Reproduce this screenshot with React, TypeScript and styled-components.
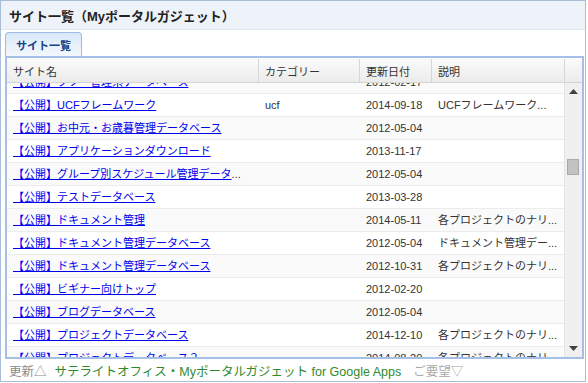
import styled, { createGlobalStyle } from 'styled-components'

const GlobalStyle = createGlobalStyle`
	body {
		margin: 0;
		background: #fff;
		font-family: 'Liberation Sans', 'Noto Sans CJK JP', sans-serif;
	}
`

type Site = { name: string; category?: string; date: string; note?: string }

const sites: Site[] = [
	{ name: '【公開】ブツ一管理系データベース', date: '2012-02-17' },
	{ name: '【公開】UCFフレームワーク', category: 'ucf', date: '2014-09-18', note: 'UCFフレームワーク...' },
	{ name: '【公開】お中元・お歳暮管理データベース', date: '2012-05-04' },
	{ name: '【公開】アプリケーションダウンロード', date: '2013-11-17' },
	{ name: '【公開】グループ別スケジュール管理データ', more: true, date: '2012-05-04' } as Site & { more?: boolean },
	{ name: '【公開】テストデータベース', date: '2013-03-28' },
	{ name: '【公開】ドキュメント管理', date: '2014-05-11', note: '各プロジェクトのナリ...' },
	{ name: '【公開】ドキュメント管理データベース', date: '2012-05-04', note: 'ドキュメント管理デー...' },
	{ name: '【公開】ドキュメント管理データベース', date: '2012-10-31', note: '各プロジェクトのナリ...' },
	{ name: '【公開】ビギナー向けトップ', date: '2012-02-20' },
	{ name: '【公開】ブログデータベース', date: '2012-05-04' },
	{ name: '【公開】プロジェクトデータベース', date: '2014-12-10', note: '各プロジェクトのナリ...' },
	{ name: '【公開】プロジェクトデータベース２', date: '2014-08-20', note: '各プロジェクトのナリ...' },
]

const columns = '252px 101px 72px 133px'

export default function App() {
	return (
		<>
			<GlobalStyle />
			<Frame>
				<TitleBar>サイト一覧（Myポータルガジェット）</TitleBar>
				<TabStrip>
					<Tab>サイト一覧</Tab>
				</TabStrip>
				<Panel>
					<HeaderRow>
						<HeadCell>サイト名</HeadCell>
						<HeadCell>カテゴリー</HeadCell>
						<HeadCell>更新日付</HeadCell>
						<HeadCell>説明</HeadCell>
						<HeadCell />
					</HeaderRow>
					<Body>
						<Rows>
							<RowList>
								{sites.map((site, i) => (
									<Row key={i} shaded={i % 2 === 0}>
										<Cell>
											<SiteLink href='#'>{site.name}</SiteLink>
											{(site as Site & { more?: boolean }).more && '...'}
										</Cell>
										<Cell>{site.category}</Cell>
										<Cell>{site.date}</Cell>
										<Cell>{site.note}</Cell>
									</Row>
								))}
							</RowList>
						</Rows>
						<ScrollTrack>
							<Arrow>
								<svg width='9' height='5' viewBox='0 0 9 5'>
									<path d='M0 5 L4.5 0 L9 5 Z' fill='#404040' />
								</svg>
							</Arrow>
							<Thumb style={{ top: 76 }} />
							<Arrow>
								<svg width='9' height='5' viewBox='0 0 9 5'>
									<path d='M0 0 L4.5 5 L9 0 Z' fill='#404040' />
								</svg>
							</Arrow>
						</ScrollTrack>
					</Body>
				</Panel>
				<Footer>
					<Muted>更新△</Muted>
					<Brand>サテライトオフィス・Myポータルガジェット for Google Apps</Brand>
					<Faint>ご要望▽</Faint>
				</Footer>
			</Frame>
		</>
	)
}

const Frame = styled.div`
	width: 584px;
	height: 380px;
	border: 1px solid #a9bdd8;
	display: flex;
	flex-direction: column;
	overflow: hidden;
	background: #fff;
`

const TitleBar = styled.div`
	height: 28px;
	flex: none;
	display: flex;
	align-items: center;
	padding-left: 8px;
	background: #eef3fa;
	border-bottom: 1px solid #dfe7f2;
	font-size: 13px;
	font-weight: bold;
	color: #222;
`

const TabStrip = styled.div`
	height: 26px;
	flex: none;
	display: flex;
	align-items: flex-end;
	padding-left: 4px;
`

const Tab = styled.div`
	height: 24px;
	box-sizing: border-box;
	width: 77px;
	display: flex;
	align-items: center;
	justify-content: center;
	border: 1px solid #9dbbe5;
	border-bottom: none;
	border-radius: 4px 4px 0 0;
	background: linear-gradient(#d9e7f8, #f4f8fd);
	font-size: 11px;
	font-weight: bold;
	color: #15428b;
`

const Panel = styled.div`
	flex: 1;
	min-height: 0;
	margin: 0 1px 0 4px;
	border: 2px solid #a5c0e6;
	padding-top: 1px;
	display: flex;
	flex-direction: column;
`

const HeaderRow = styled.div`
	height: 23px;
	flex: none;
	display: grid;
	grid-template-columns: ${columns} 1fr;
	background: linear-gradient(#fbfbfb, #ebebeb);
	border-bottom: 1px solid #d4d4d4;
`

const HeadCell = styled.div`
	display: flex;
	align-items: center;
	padding-left: 6px;
	border-right: 1px solid #d6d6d6;
	font-size: 11px;
	color: #333;
	&:last-child {
		border-right: none;
	}
`

const Body = styled.div`
	flex: 1;
	min-height: 0;
	display: flex;
`

const Rows = styled.div`
	flex: 1;
	overflow: hidden;
`

const RowList = styled.div`
	margin-top: -12px;
`

const Row = styled.div<{ shaded: boolean }>`
	height: 23px;
	box-sizing: border-box;
	display: grid;
	grid-template-columns: ${columns};
	background: ${({ shaded }) => (shaded ? '#fafafa' : '#fff')};
	border-bottom: 1px solid #ececec;
`

const Cell = styled.div`
	padding-left: 6px;
	min-width: 0;
	font-size: 11px;
	line-height: 22px;
	color: #333;
	white-space: nowrap;
	overflow: hidden;
`

const SiteLink = styled.a`
	color: #0000ee;
	text-decoration: underline;
`

const ScrollTrack = styled.div`
	position: relative;
	width: 17px;
	flex: none;
	background: #f0f0f0;
	border-left: 1px solid #e4e4e4;
	display: flex;
	flex-direction: column;
	justify-content: space-between;
`

const Arrow = styled.div`
	height: 17px;
	display: flex;
	align-items: center;
	justify-content: center;
`

const Thumb = styled.div`
	position: absolute;
	left: 2px;
	width: 12px;
	height: 16px;
	box-sizing: border-box;
	background: #c2c2c2;
	border: 1px solid #a9a9a9;
`

const Footer = styled.div`
	height: 22px;
	flex: none;
	display: flex;
	align-items: center;
	gap: 8px;
	padding-left: 8px;
	font-size: 12.5px;
`

const Muted = styled.span`
	color: #8a8a8a;
`

const Brand = styled.span`
	color: #2f8a2f;
`

const Faint = styled.span`
	color: #a8a8a8;
	margin-left: 4px;
`
